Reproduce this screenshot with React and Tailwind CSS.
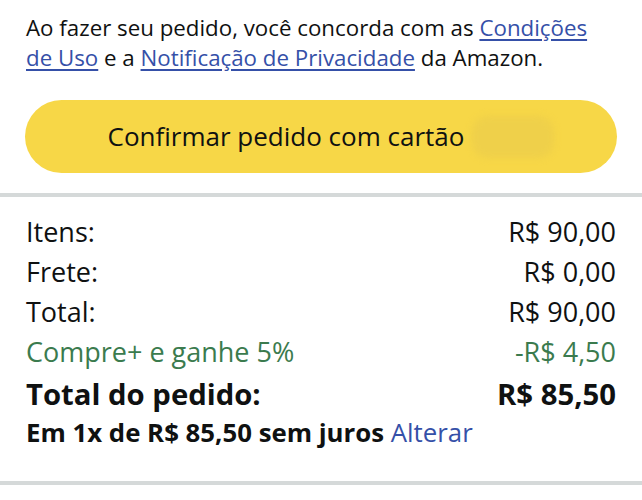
export default function App() {
  const rows = [
    { label: "Itens:", value: "R$ 90,00" },
    { label: "Frete:", value: "R$ 0,00" },
    { label: "Total:", value: "R$ 90,00" },
  ];

  return (
    <div className="w-[642px] h-[500px] bg-white text-[#0f1111] font-['Open_Sans',sans-serif] overflow-hidden">
      <div className="px-[26px] pt-[13px] pb-[20px]">
        <p className="text-[22.3px] leading-[30px]">
          Ao fazer seu pedido, você concorda com as{" "}
          <a href="#" className="text-[#3550a8] underline underline-offset-[3px]">
            Condições de Uso
          </a>{" "}
          e a{" "}
          <a href="#" className="text-[#3550a8] underline underline-offset-[3px]">
            Notificação de Privacidade
          </a>{" "}
          da Amazon.
        </p>

        <button className="mt-[27px] w-[592px] -ml-px h-[73px] pl-[20px] rounded-full bg-[#f7d747] flex items-center justify-center text-[26px] text-[#0f1111]">
          <span>Confirmar pedido com cartão</span>
          <span className="ml-[8px] w-[82px] h-[42px] rounded-[16px] bg-[#efd04a] blur-[3px]" />
        </button>
      </div>

      <div className="h-[4px] bg-[#d5d9d9]" />

      <div className="px-[26px] pt-[15px] pb-[34px]">
        {rows.map((r) => (
          <div key={r.label} className="flex justify-between text-[27px] leading-[40px]">
            <span>{r.label}</span>
            <span>{r.value}</span>
          </div>
        ))}
        <div className="flex justify-between text-[27px] leading-[40px] text-[#3b7b4e]">
          <span>Compre+ e ganhe 5%</span>
          <span>-R$ 4,50</span>
        </div>
        <div className="flex justify-between text-[29.3px] leading-[45px] font-bold">
          <span>Total do pedido:</span>
          <span>R$ 85,50</span>
        </div>
        <div className="text-[25.8px] leading-[30px] font-bold">
          Em 1x de R$ 85,50 sem juros{" "}
          <a href="#" className="font-normal text-[#3550a8]">
            Alterar
          </a>
        </div>
      </div>

      <div className="h-[4px] bg-[#d5d9d9]" />
    </div>
  );
}
